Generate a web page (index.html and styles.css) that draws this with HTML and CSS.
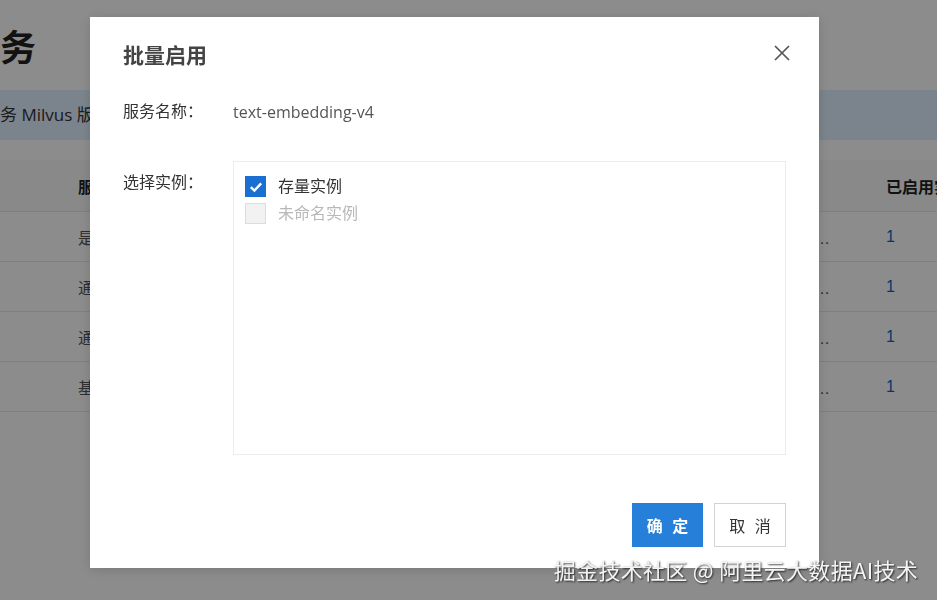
FILE: index.html
```html
<!DOCTYPE html>
<html lang="zh-CN">
<head>
    <meta charset="UTF-8">
    <meta name="viewport" content="width=device-width, initial-scale=1.0">
    <title>批量启用</title>
    <link rel="stylesheet" href="styles.css">
</head>
<body>

<div class="page">
    <h1 class="page-title">务</h1>
    <div class="notice">务 Milvus 版提供向量检索服务，支持多种模型</div>

    <div class="table">
        <div class="tr th">
            <div></div>
            <div class="cell">服务描述</div>
            <div class="cell ellipsis">服务类型</div>
            <div class="cell nowrap">已启用实例</div>
        </div>
        <div class="tr">
            <div></div>
            <div class="cell">是否启用</div>
            <div class="cell ellipsis">通用文本向量模型，支持多语言文本向量化处理码码码码码码码码码码码码码码码码码码码码码码码码码码码码码码码码码码码码码码码码码码</div>
            <div class="cell num">1</div>
        </div>
        <div class="tr">
            <div></div>
            <div class="cell">通用</div>
            <div class="cell ellipsis">通用文本排序模型，支持多语言文本检索与重排序场景万万万万万万万万万万万万万万万万万万万万万万万万万万万万万万万万万万万万万万万万万</div>
            <div class="cell num">1</div>
        </div>
        <div class="tr">
            <div></div>
            <div class="cell">通用</div>
            <div class="cell ellipsis">通用多模态向量模型，支持图片与文本统一向量化万万万万万万万万万万万万万万万万万万万万万万万万万万万万万万万万万万万万万万万万万</div>
            <div class="cell num">1</div>
        </div>
        <div class="tr">
            <div></div>
            <div class="cell">基础</div>
            <div class="cell ellipsis">基础文本切分服务，支持长文档按段落切分一一一一一一一一一一一一一一一一一一一一一一一一一一一一一一一一一一一一一一一一一一一一</div>
            <div class="cell num">1</div>
        </div>
    </div>
</div>

<div class="mask"></div>

<div class="dialog">
    <div class="dialog-head">
        <h2 class="dialog-title">批量启用</h2>
        <button type="button" class="close" aria-label="关闭">
            <svg width="16" height="16" viewBox="0 0 16 16">
                <path d="M1 1 L15 15 M15 1 L1 15" stroke="#555" stroke-width="1.7" fill="none"/>
            </svg>
        </button>
    </div>

    <div class="form-row">
        <div class="label">服务名称：</div>
        <div class="value">text-embedding-v4</div>
    </div>

    <div class="form-row select-row">
        <div class="label">选择实例：</div>
        <div class="instance-box">
            <label class="check">
                <span class="box checked">
                    <svg width="16" height="16" viewBox="0 0 16 16">
                        <path d="M2.8 8.2 L6.4 11.6 L13.2 4.4" stroke="#fff" stroke-width="2.4" fill="none"/>
                    </svg>
                </span>
                存量实例
            </label>
            <label class="check disabled">
                <span class="box"></span>
                未命名实例
            </label>
        </div>
    </div>

    <div class="dialog-foot">
        <button type="button" class="btn primary">确 定</button>
        <button type="button" class="btn">取 消</button>
    </div>
</div>

<div class="watermark">掘金技术社区 @ 阿里云大数据AI技术</div>

</body>
</html>
```

FILE: styles.css
```css
* {
    box-sizing: border-box;
}
body {
    margin: 0;
    font-family: "Liberation Sans", "Noto Sans CJK SC", sans-serif;
    color: #333;
    background: #fff;
    width: 937px;
    height: 600px;
    overflow: hidden;
}
.page {
    padding-top: 20px;
}
.page-title {
    margin: 0;
    font-family: "Noto Sans CJK SC", sans-serif;
    font-size: 36px;
    line-height: 50px;
    font-weight: bold;
    color: #222;
}
.notice {
    margin-top: 20px;
    height: 50px;
    line-height: 50px;
    background: #e1f0ff;
    font-family: "Open Sans", "Noto Sans CJK SC", sans-serif;
    font-size: 17px;
    color: #333;
    white-space: nowrap;
}
.table {
    margin-top: 20px;
}
.tr {
    display: grid;
    grid-template-columns: 78px 320px 1fr 51px;
    height: 50px;
    align-items: center;
    border-bottom: 1px solid #e8e8e8;
    font-size: 16px;
}
.th {
    height: 52px;
    font-weight: bold;
    background: #fafafa;
}
.cell {
    overflow: hidden;
    white-space: nowrap;
    color: #555;
}
.th .cell {
    color: #222;
}
.ellipsis {
    text-overflow: ellipsis;
    margin-right: 50px;
}
.nowrap {
    overflow: visible;
}
.num {
    color: #0a66c2;
}
.mask {
    position: fixed;
    inset: 0;
    background: rgba(0, 0, 0, 0.45);
}
.dialog {
    position: fixed;
    left: 90px;
    top: 17px;
    width: 729px;
    height: 551px;
    background: #fff;
    padding: 23px 33px 21px 33px;
    box-shadow: 0 2px 12px rgba(0, 0, 0, 0.15);
}
.dialog-head {
    display: flex;
    justify-content: space-between;
    align-items: center;
    height: 28px;
}
.dialog-title {
    margin: 0;
    font-family: "Noto Sans CJK SC", sans-serif;
    font-size: 21px;
    font-weight: bold;
    color: #444;
}
.close {
    border: none;
    background: none;
    padding: 0;
    margin-right: -4px;
    margin-top: -2px;
    width: 16px;
    height: 16px;
    display: flex;
}
.form-row {
    display: flex;
    margin-top: 33px;
    font-size: 16px;
    line-height: 22px;
}
.select-row {
    margin-top: 38px;
}
.label {
    width: 110px;
    flex-shrink: 0;
    color: #333;
}
.select-row .label {
    padding-top: 11px;
}
.value {
    font-family: "Open Sans", sans-serif;
    color: #555;
}
.instance-box {
    flex: 1;
    height: 294px;
    border: 1px solid #ececec;
    padding: 14px 11px;
    display: flex;
    flex-direction: column;
    gap: 6px;
}
.check {
    display: flex;
    align-items: center;
    gap: 12px;
    color: #333;
    line-height: 21px;
}
.box {
    width: 21px;
    height: 21px;
    border: 1px solid #dcdcdc;
    background: #f2f2f2;
    display: flex;
    align-items: center;
    justify-content: center;
}
.box.checked {
    background: #1b6fd1;
    border-color: #1b6fd1;
}
.check.disabled {
    color: #b8b8b8;
}
.dialog-foot {
    display: flex;
    justify-content: flex-end;
    gap: 11px;
    margin-top: 48px;
}
.btn {
    height: 44px;
    width: 72px;
    font-family: "Noto Sans CJK SC", sans-serif;
    font-size: 16px;
    background: #fff;
    border: 1px solid #d3d3d3;
    color: #333;
    letter-spacing: 3px;
    padding: 0 0 0 3px;
}
.btn.primary {
    width: 71px;
    background: #2680d9;
    border-color: #2680d9;
    color: #fff;
    font-weight: bold;
}
.watermark {
    position: fixed;
    right: 19px;
    top: 554px;
    font-family: "Noto Sans CJK SC", sans-serif;
    font-size: 22px;
    letter-spacing: 0.3px;
    line-height: 30px;
    color: #f4f4f4;
    text-shadow: 1px 1px 2px rgba(0, 0, 0, 0.75);
    white-space: nowrap;
}
```
